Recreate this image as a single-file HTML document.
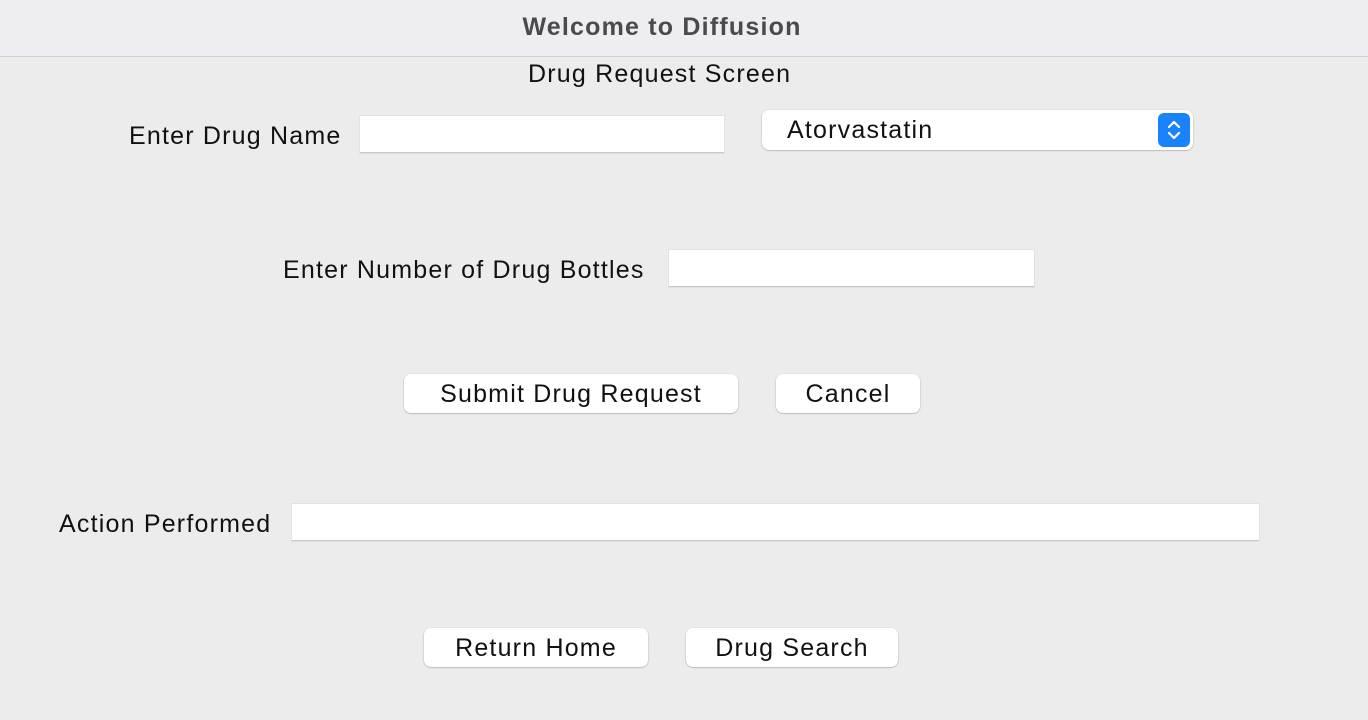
<!DOCTYPE html>
<html><head><style>
body{margin:0;width:1368px;height:720px;background:#ececec;font-family:"Liberation Sans",sans-serif;position:relative;overflow:hidden;color:#111}
.t{position:absolute;font-size:25px;white-space:nowrap;line-height:28px;letter-spacing:1.2px}
.f{position:absolute;background:#fff;border-bottom:1px solid #c8c8c8;box-shadow:0 0 0 1px #e2e2e2}
.b{position:absolute;background:#fff;border-radius:7px;box-shadow:0 0.5px 1.5px rgba(0,0,0,.35);font-size:25px;text-align:center;letter-spacing:1.2px}
</style></head><body>
<div style="position:absolute;left:0;top:0;width:1368px;height:56px;background:#eeedf1;border-bottom:1px solid #d0d0d0"></div>
<div class="t" style="left:0;width:1324px;text-align:center;top:13px;font-weight:bold;color:#4a4a4a;letter-spacing:1.2px;font-size:25px">Welcome to Diffusion</div>
<div class="t" style="left:528px;top:60px">Drug Request Screen</div>
<div class="t" style="left:129px;top:122px">Enter Drug Name</div>
<div class="f" style="left:360px;top:116px;width:364px;height:36px"></div>
<div class="b" style="left:762px;top:110px;width:431px;height:40px;text-align:left">
<span style="position:absolute;left:25px;top:6px">Atorvastatin</span>
<div style="position:absolute;left:396px;top:3px;width:32px;height:34px;background:#1a82fb;border-radius:6px">
<svg width="32" height="34" viewBox="0 0 32 34"><path d="M11 14l5-5 5 5M11 20l5 5 5-5" fill="none" stroke="#fff" stroke-width="2.2" stroke-linecap="round" stroke-linejoin="round"/></svg></div></div>
<div class="t" style="left:283px;top:256px">Enter Number of Drug Bottles</div>
<div class="f" style="left:669px;top:250px;width:365px;height:36px"></div>
<div class="b" style="left:404px;top:374px;width:334px;height:39px;line-height:40px">Submit Drug Request</div>
<div class="b" style="left:776px;top:374px;width:144px;height:39px;line-height:40px">Cancel</div>
<div class="t" style="left:59px;top:510px">Action Performed</div>
<div class="f" style="left:292px;top:504px;width:967px;height:36px"></div>
<div class="b" style="left:424px;top:628px;width:224px;height:39px;line-height:40px">Return Home</div>
<div class="b" style="left:686px;top:628px;width:212px;height:39px;line-height:40px">Drug Search</div>
</body></html>
